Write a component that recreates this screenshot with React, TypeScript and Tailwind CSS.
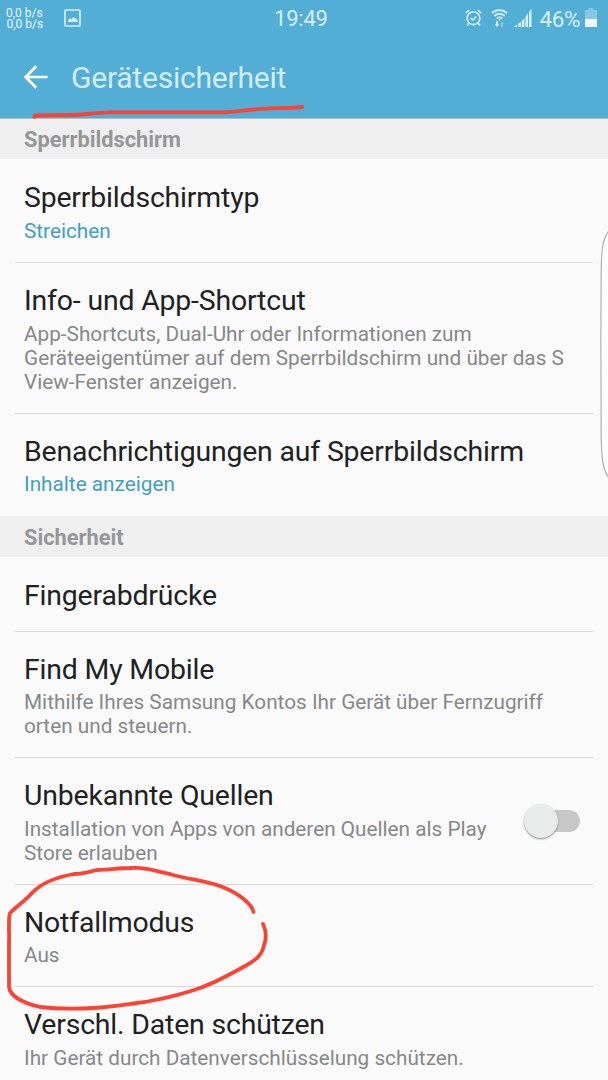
import React from 'react';

interface SettingRowProps {
  title: string;
  lines?: string[];
  accent?: boolean;
  first?: boolean;
  children?: React.ReactNode;
}

const SettingRow = ({ title, lines = [], accent, first, children }: SettingRowProps) => (
  <div className="px-[15px]">
    <div
      className={`flex items-start justify-between border-t pl-[9px] pr-[12px] pt-[21px] ${
        lines.length > 0 ? 'pb-[19px]' : 'pb-[17.6px]'
      } ${first ? 'border-transparent' : 'border-[#d8d8d8]'}`}
    >
      <div>
        <h2 className="whitespace-nowrap text-[28.4px] leading-[34px] tracking-[-0.16px] text-[#202122]">{title}</h2>
        {lines.length > 0 && (
          <div
            className={`mt-[3.6px] whitespace-nowrap text-[20.75px] leading-[24px] ${
              accent ? 'text-[#419fc2]' : 'text-[#868889]'
            }`}
          >
            {lines.map((line) => (
              <p key={line}>{line}</p>
            ))}
          </div>
        )}
      </div>
      {children}
    </div>
  </div>
);

const SectionHeader = ({ children }: { children: React.ReactNode }) => (
  <div className="h-[41px] bg-[#efefef] px-6 pt-[3px] text-[21.8px] leading-[37px] font-bold text-[#949697]">
    {children}
  </div>
);

const StatusBar = () => (
  <div className="flex h-[37px] text-[#d9edf5]">
    <div className="flex w-[273px] pl-[6px] pt-[9px]">
      <div className="-mt-px w-[58px] whitespace-nowrap text-[12px] leading-[11px] text-[#eef8fb]">
        <p>0,0 b/s</p>
        <p className="pl-[0.5px]">0,0 b/s</p>
      </div>
      <svg className="h-[18px] w-[18px]" viewBox="0 0 18 18" fill="none">
        <rect x="1" y="1" width="15" height="16" rx="1" stroke="currentColor" strokeWidth="1.7" />
        <path d="M4 13V11l2-1.5 1.2.6L9.8 8l1 1.4 1-.4 1.7 2v2z" fill="currentColor" />
      </svg>
    </div>
    <div className="pt-[5px] pl-px text-[22px] leading-[28px] tracking-[-0.2px]">19:49</div>
    <div className="flex flex-1 items-start justify-end pr-[11px]">
      {/* alarm */}
      <svg className="mr-[9px] mt-[9px] h-[18px] w-[17px] shrink-0" viewBox="0 0 17 18" fill="none" stroke="currentColor" strokeWidth="1.6">
        <circle cx="8.5" cy="9.2" r="6.4" />
        <path d="M5.8 9l2 2 3.6-3.3M0.8 4.2L4.2 1M16.2 4.2L12.8 1M4 14l-2 2.5M13 14l2 2.5" />
      </svg>
      {/* wifi */}
      <svg className="mr-[6px] mt-[9px] h-[18px] w-[17px] shrink-0" viewBox="0 0 17 18" fill="none" stroke="currentColor" strokeWidth="1.8">
        <path d="M1 4.2a10.5 10.5 0 0 1 15 0M3.3 7a7.3 7.3 0 0 1 10.4 0M5.7 9.6a4 4 0 0 1 5.6 0" />
        <path d="M7 10.2h3l-1.5 1.8z" fill="currentColor" stroke="none" />
        <path d="M5 12.2h2v3h1.3L6 18l-2.3-2.8H5z" fill="currentColor" stroke="none" />
        <path d="M10 18v-2.8H9l2-2.7 2 2.7h-1V18z" fill="currentColor" stroke="none" opacity=".45" />
      </svg>
      {/* signal */}
      <svg className="mr-[7px] mt-[9px] h-[18px] w-[18px] shrink-0" viewBox="0 0 18 18" fill="currentColor">
        <path d="M0 18l3-2.5V18zM4 14.8l3-2V18H4zM7.8 11.8l2.7-2.6V18H7.8zM11.5 7.5L14 4.4V18h-2.5zM15 3l2.5-3v18H15z" />
      </svg>
      <span className="mr-[5px] pt-[5px] text-[22.5px] leading-[28px] tracking-[-0.4px]">46%</span>
      {/* battery */}
      <svg className="mt-[8px] h-[19px] w-[12px] shrink-0" viewBox="0 0 12 19" fill="currentColor">
        <path d="M3.5 0h5v2H12v9H0V2h3.5z" opacity=".4" />
        <path d="M0 11h12v8H0z" className="text-[#eef8fb]" />
      </svg>
    </div>
  </div>
);

const App = () => {
  return (
    <div className="relative h-[1080px] w-[608px] overflow-hidden bg-[#fafafa] font-[Roboto,sans-serif]">
      <header className="h-[119px] border-b border-[#b0bfc6] bg-[#52aed4]">
        <StatusBar />
        <div className="flex h-[81px] items-center pl-6">
          <svg className="mb-px h-[24px] w-[24px]" viewBox="0 0 24 24" fill="none" stroke="#fff" strokeWidth="2.7">
            <path d="M23.5 12H2M12.2 1.3L1.7 12l10.5 10.7" />
          </svg>
          <h1 className="pl-[23px] pt-px text-[30px] leading-[36px] tracking-[-0.22px] text-[#d5ebf5]">Gerätesicherheit</h1>
        </div>
      </header>

      <div className="-mt-px h-[41px] [clip-path:inset(1px_0_0_0)]">
        <SectionHeader>Sperrbildschirm</SectionHeader>
      </div>
      <div className="pt-[0.4px] pb-[0.8px]">
        <SettingRow title="Sperrbildschirmtyp" lines={['Streichen']} accent first />
        <SettingRow
          title="Info- und App-Shortcut"
          lines={[
            'App-Shortcuts, Dual-Uhr oder Informationen zum',
            'Geräteeigentümer auf dem Sperrbildschirm und über das S',
            'View-Fenster anzeigen.',
          ]}
        />
        <SettingRow title="Benachrichtigungen auf Sperrbildschirm" lines={['Inhalte anzeigen']} accent />
      </div>

      <SectionHeader>Sicherheit</SectionHeader>
      <SettingRow title="Fingerabdrücke" first />
      <SettingRow
        title="Find My Mobile"
        lines={['Mithilfe Ihres Samsung Kontos Ihr Gerät über Fernzugriff', 'orten und steuern.']}
      />
      <SettingRow
        title="Unbekannte Quellen"
        lines={['Installation von Apps von anderen Quellen als Play', 'Store erlauben']}
      >
        <button className="mt-[24px] flex h-[36px] w-[57px] shrink-0 items-center" role="switch" aria-checked="false">
          <span className="z-10 h-[34px] w-[34px] shrink-0 rounded-full bg-[#e9ebeb] shadow-[0_1px_2px_#888]" />
          <span className="-ml-[17px] h-[22px] w-[39px] shrink-0 rounded-[11px] bg-[#c7c7c7]" />
        </button>
      </SettingRow>
      <SettingRow title="Notfallmodus" lines={['Aus']} />
      <SettingRow title="Verschl. Daten schützen" lines={['Ihr Gerät durch Datenverschlüsselung schützen.']} />

      {/* edge panel handle */}
      <svg className="absolute right-0 top-[228px] h-[254px] w-[10px]" viewBox="0 0 10 254">
        <path d="M11 3C5 10 3.5 20 3.2 42C2.7 95 2.7 160 3.2 207C3.5 232 5 242 11 250" fill="#fdfdfd" stroke="#b0b0b0" strokeWidth="1.2" />
      </svg>

      {/* red pen marks */}
      <svg
        className="pointer-events-none absolute inset-0 z-20 h-[1080px] w-[608px]"
        viewBox="0 0 608 1080"
        fill="none"
        stroke="#f94334"
        strokeWidth="3.8"
        strokeLinecap="round"
        strokeLinejoin="round"
      >
        <path d="M34.5 117L35 115.5C55 115 75 115.5 87 114C95 113 103 112.3 110 112.3L225 112.3C240 111.5 255 108.7 270 108.3C282 108 292 108.2 302 107" />
        <path d="M253.5 912C252 904 239 894 225 888C212 882 193 880 173 875C157 871 145 867 130 868C119 868 109 870 97 870C88 872 82 874 74 874C57 877 43 882 33 892C26 900 16 907 10 913C8 918 9.5 930 9 944L9 987C10 996 23 1003 40 1007C57 1009 76 1009 93 1008C113 1007 128 1004 145 1002C166 998 184 994 200 988C217 982 234 972 247 965C255 960 262 956 264 945C267 937 266 930 263 924" />
      </svg>
    </div>
  );
};

export default App;
